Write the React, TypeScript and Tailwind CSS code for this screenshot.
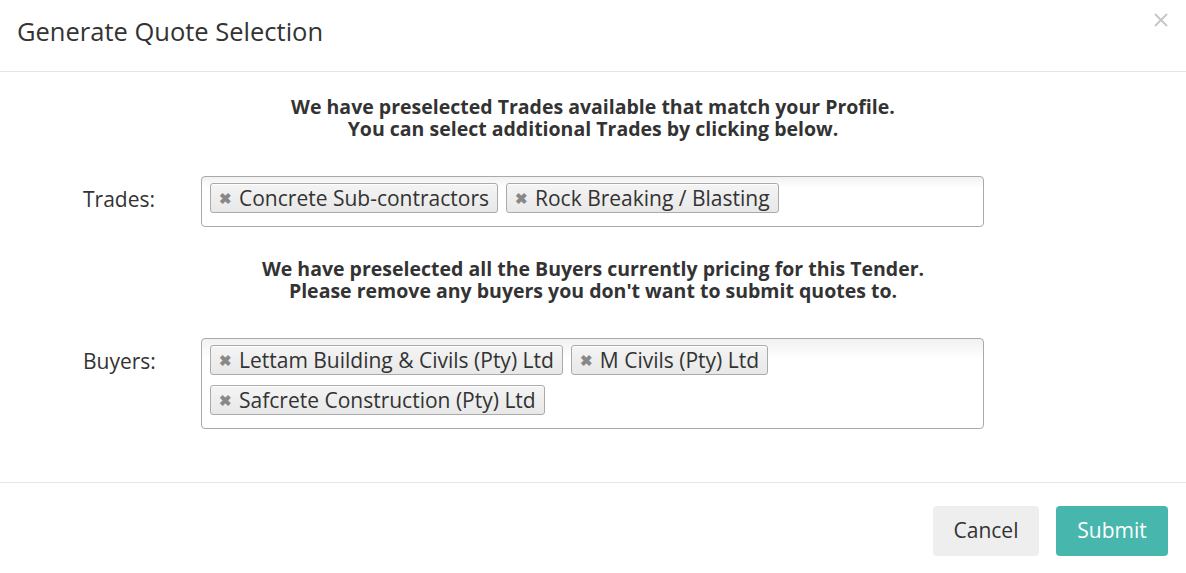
import React from "react";

function Tag({ label }: { label: string }) {
  return (
    <div className="flex h-[30px] items-center gap-[7px] rounded-[3px] border border-[#aaaaaa] bg-gradient-to-b from-[#f4f4f4] to-[#e8e8e8] pl-[8px] pr-[8px] shadow-[inset_0_1px_0_#fff]">
      <span className="text-[15px] font-bold leading-none text-[#888888]">✖</span>
      <span className="text-[21px] leading-none text-[#333333]">{label}</span>
    </div>
  );
}

function Field({ label, tags }: { label: string; tags: string[] }) {
  return (
    <div className="flex items-start">
      <div className="w-[201px] shrink-0 pl-[83px] pt-[9px] text-[21px] leading-[28px] whitespace-nowrap">{label}</div>
      <div className="flex min-h-[51px] w-[783px] flex-wrap content-start gap-x-[8px] gap-y-[10px] rounded-[4px] border border-[#aaaaaa] bg-gradient-to-b from-[#f1f1f1] from-0% via-white via-[22%] to-white pb-[13px] pl-[8px] pr-[8px] pt-[6px]">
        {tags.map((t) => (
          <Tag key={t} label={t} />
        ))}
      </div>
    </div>
  );
}

export default function App() {
  return (
    <div className="h-[573px] w-[1186px] overflow-hidden bg-white font-['Open_Sans',sans-serif] text-[#333333]">
      <div className="relative h-[72px] border-b border-[#e5e5e5] pl-[17px] pt-[13px]">
        <h4 className="text-[25.5px] font-normal leading-[36px]">Generate Quote Selection</h4>
        <button className="absolute right-[18px] top-[13px] text-[#c8c8c8]" aria-label="Close">
          <svg width="14" height="14" viewBox="0 0 14 14">
            <path d="M1 1L13 13M13 1L1 13" stroke="currentColor" strokeWidth="2" />
          </svg>
        </button>
      </div>
      <div className="flex flex-col">
        <p className="pt-[24px] text-center text-[19.5px] font-bold leading-[22px]">
          We have preselected Trades available that match your Profile.
          <br />
          You can select additional Trades by clicking below.
        </p>
        <div className="mt-[36px]">
          <Field label="Trades:" tags={["Concrete Sub-contractors", "Rock Breaking / Blasting"]} />
        </div>
        <p className="mt-[31px] text-center text-[19.5px] font-bold leading-[22px]">
          We have preselected all the Buyers currently pricing for this Tender.
          <br />
          Please remove any buyers you don't want to submit quotes to.
        </p>
        <div className="mt-[36px]">
          <Field
            label="Buyers:"
            tags={["Lettam Building & Civils (Pty) Ltd", "M Civils (Pty) Ltd", "Safcrete Construction (Pty) Ltd"]}
          />
        </div>
      </div>
      <div className="mt-[53px] flex justify-end gap-[17px] border-t border-[#e5e5e5] pr-[18px] pt-[23px]">
        <button className="h-[50px] w-[106px] rounded-[4px] bg-[#eeeeee] text-[21px] text-[#333333]">Cancel</button>
        <button className="h-[50px] w-[112px] rounded-[4px] bg-[#47b6ac] text-[21px] text-white">Submit</button>
      </div>
    </div>
  );
}
